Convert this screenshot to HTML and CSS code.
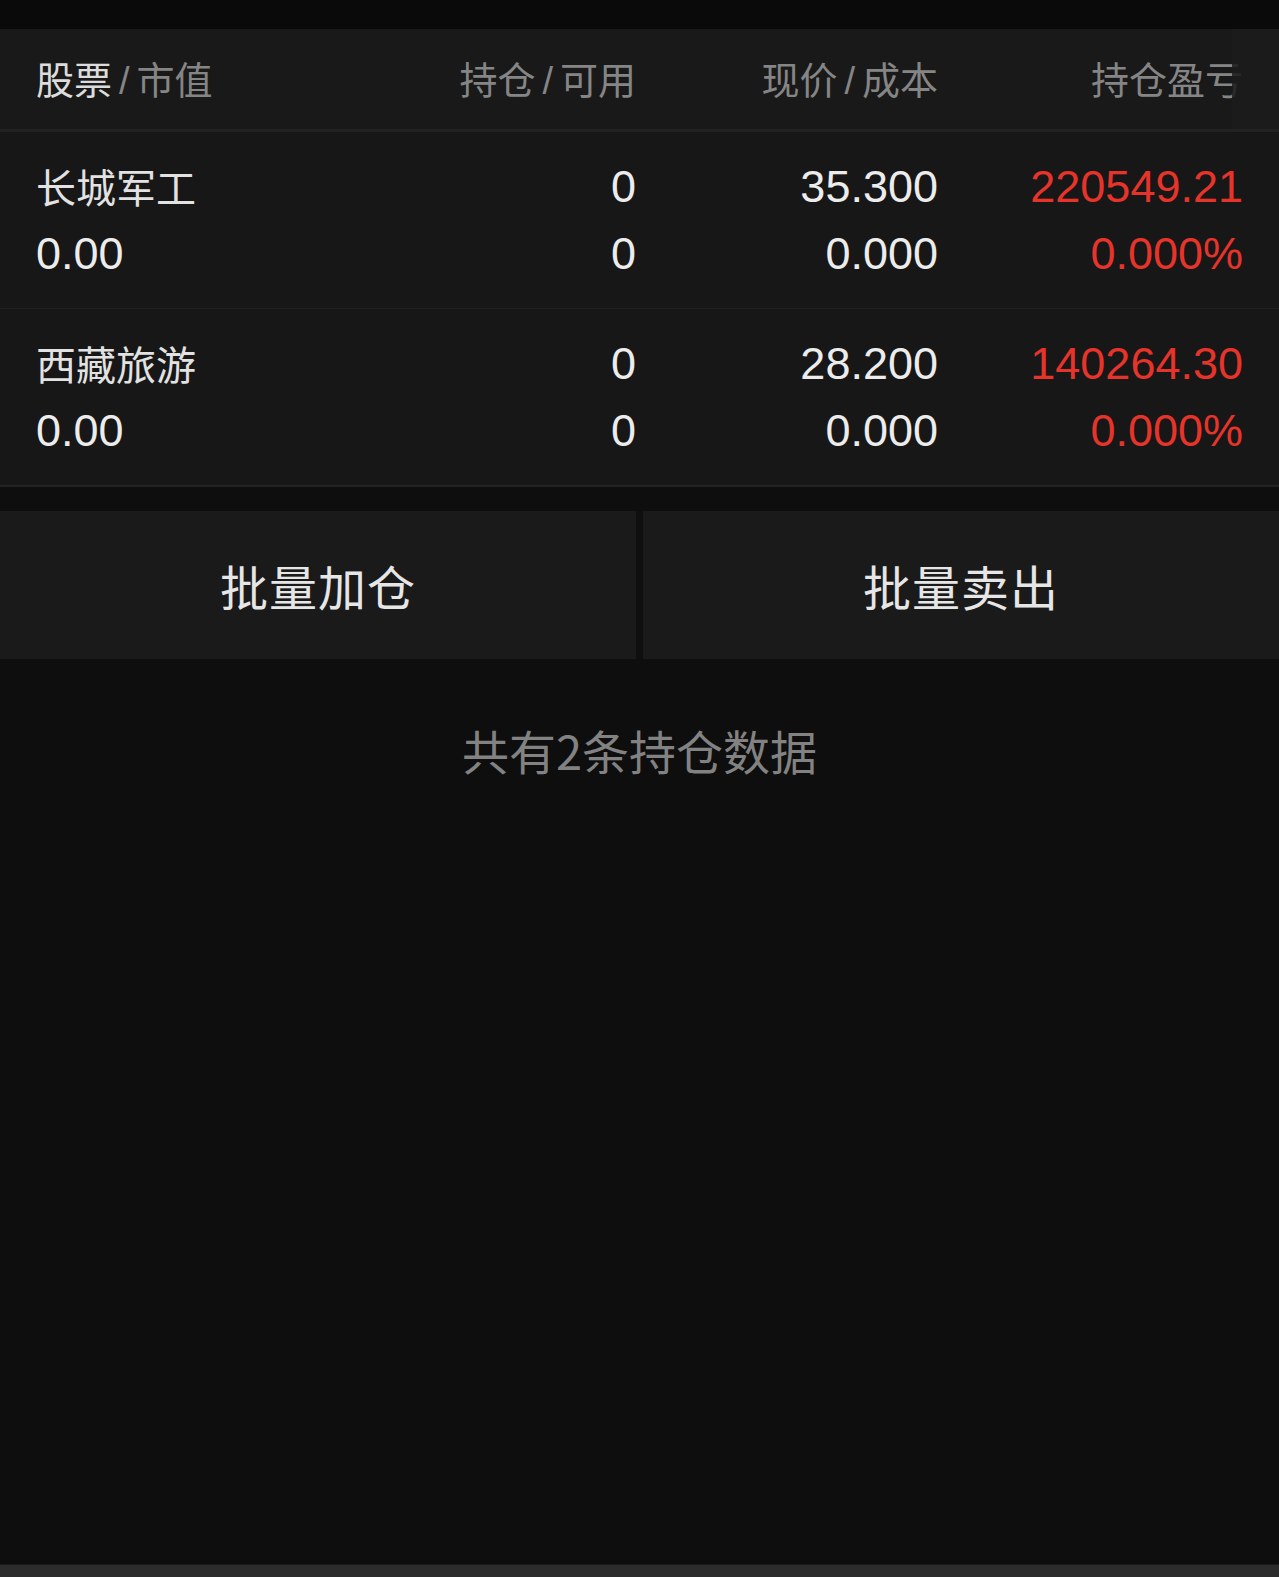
FILE: index.html
```html
<!DOCTYPE html>
<html lang="zh-CN">
<head>
    <meta charset="UTF-8">
    <meta name="viewport" content="width=device-width, initial-scale=1.0">
    <title>持仓</title>
    <link rel="stylesheet" href="styles.css">
</head>
<body>

    <div class="status-bar"></div>

    <section class="holdings">
        <div class="table-head">
            <div class="col first"><span class="strong">股票</span><span class="slash">/</span>市值</div>
            <div class="col">持仓<span class="slash">/</span>可用</div>
            <div class="col">现价<span class="slash">/</span>成本</div>
            <div class="col">持仓盈亏</div>
            <div class="head-fade"></div>
        </div>

        <div class="row">
            <div class="col first">
                <p class="name">长城军工</p>
                <p class="num">0.00</p>
            </div>
            <div class="col">
                <p class="num">0</p>
                <p class="num">0</p>
            </div>
            <div class="col">
                <p class="num">35.300</p>
                <p class="num">0.000</p>
            </div>
            <div class="col up">
                <p class="num">220549.21</p>
                <p class="num">0.000%</p>
            </div>
        </div>

        <div class="row">
            <div class="col first">
                <p class="name">西藏旅游</p>
                <p class="num">0.00</p>
            </div>
            <div class="col">
                <p class="num">0</p>
                <p class="num">0</p>
            </div>
            <div class="col">
                <p class="num">28.200</p>
                <p class="num">0.000</p>
            </div>
            <div class="col up">
                <p class="num">140264.30</p>
                <p class="num">0.000%</p>
            </div>
        </div>
    </section>

    <section class="actions">
        <button class="action-btn">批量加仓</button>
        <button class="action-btn">批量卖出</button>
    </section>

    <p class="summary">共有2条持仓数据</p>

    <div class="bottom-bar"></div>

</body>
</html>
```

FILE: styles.css
```css
* {
    margin: 0;
    padding: 0;
    box-sizing: border-box;
    font-family: 'Liberation Sans', 'Noto Sans CJK SC', sans-serif;
}

body {
    background-color: #0e0e0e;
    color: #e6e6e6;
    width: 1279px;
    height: 1577px;
    display: flex;
    flex-direction: column;
    overflow: hidden;
}

.status-bar {
    height: 29px;
    background: #0a0a0a;
}

.holdings {
    background: #171717;
    border-bottom: 2px solid #232323;
}

.table-head, .row {
    display: grid;
    grid-template-columns: 360px 240px 302px 305px;
    padding: 0 36px;
}

.table-head {
    position: relative;
    height: 103px;
    align-items: center;
    background: #191919;
    border-bottom: 3px solid #222222;
    font-family: 'Noto Sans CJK SC', sans-serif;
    font-size: 38px;
    color: #858585;
    padding-bottom: 4px;
    overflow: hidden;
}

.table-head .col {
    text-align: right;
    white-space: nowrap;
}

.table-head .first {
    text-align: left;
}

.strong {
    color: #dcdcdc;
}

.slash {
    font-family: 'Liberation Sans', sans-serif;
    margin: 0 7px;
}

.head-fade {
    position: absolute;
    top: 0;
    right: 0;
    width: 47px;
    height: 100%;
    background: linear-gradient(to right, rgba(27, 27, 27, 0.85), #1b1b1b);
}

.row {
    padding-top: 21px;
    padding-bottom: 21px;
    border-bottom: 1px solid #202020;
}

.row:last-child {
    border-bottom: none;
}

.row .col {
    text-align: right;
}

.row .first {
    text-align: left;
}

.row p {
    height: 67px;
    line-height: 67px;
    white-space: nowrap;
}

.name {
    font-family: 'Noto Sans CJK SC', sans-serif;
    font-size: 40px;
    color: #e2e2e2;
}

.num {
    font-size: 45px;
    color: #ececec;
}

.up .num {
    color: #e6342b;
}

.actions {
    margin-top: 24px;
    display: flex;
    gap: 7px;
    background: #0f0f0f;
}

.action-btn {
    flex: 1;
    height: 148px;
    background: #1a1a1a;
    border: none;
    color: #e6e6e6;
    font-family: 'Noto Sans CJK SC', sans-serif;
    font-size: 48px;
    letter-spacing: 1px;
}

.summary {
    margin-top: 56px;
    text-align: center;
    font-family: 'Noto Sans CJK SC', sans-serif;
    font-size: 47px;
    color: #828282;
}

.bottom-bar {
    margin-top: auto;
    height: 13px;
    background: #2c2c2c;
    border-top: 1px solid #1a1a1a;
}
```
